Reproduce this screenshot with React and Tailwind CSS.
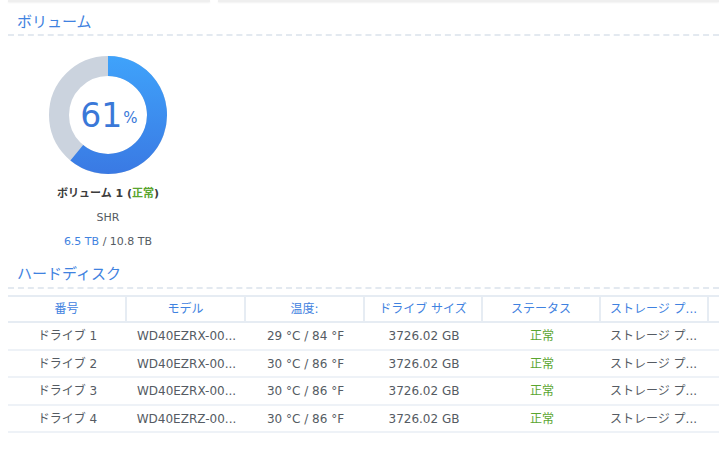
import React from "react";

const rows = [
  ["ドライブ 1", "WD40EZRX-00...", "29 °C / 84 °F"],
  ["ドライブ 2", "WD40EZRX-00...", "30 °C / 86 °F"],
  ["ドライブ 3", "WD40EZRX-00...", "30 °C / 86 °F"],
  ["ドライブ 4", "WD40EZRZ-00...", "30 °C / 86 °F"],
];

const cols = "grid grid-cols-[119px_119px_119px_118px_118px_108px_1fr]";

function arcPath(cx, cy, r, frac) {
  const a = frac * 2 * Math.PI;
  const x = cx + r * Math.sin(a);
  const y = cy - r * Math.cos(a);
  const large = frac > 0.5 ? 1 : 0;
  return `M ${cx} ${cy - r} A ${r} ${r} 0 ${large} 1 ${x.toFixed(2)} ${y.toFixed(2)}`;
}

function Donut() {
  const r = 49;
  return (
    <div className="relative w-[120px] h-[120px]">
      <svg width="120" height="120" viewBox="0 0 120 120">
        <defs>
          <linearGradient id="g" gradientUnits="userSpaceOnUse" x1="60" y1="0" x2="60" y2="120">
            <stop offset="0" stopColor="#3fa3fb" />
            <stop offset="1" stopColor="#3a79e3" />
          </linearGradient>
        </defs>
        <circle cx="60" cy="60" r={r} fill="none" stroke="#cbd3de" strokeWidth="20" />
        <path d={arcPath(60, 60, r, 0.61)} fill="none" stroke="url(#g)" strokeWidth="20" />
      </svg>
      <div className="absolute inset-0 flex items-center justify-center text-[#3a78d8] pl-[2px]">
        <span className="text-[33px] leading-none">61</span>
        <span className="text-[15px] leading-none mt-[7px] ml-[1px]">%</span>
      </div>
    </div>
  );
}

export default function App() {
  return (
    <div
      className="w-[719px] h-[450px] bg-white overflow-hidden text-[#555b63]"
      style={{ fontFamily: '"DejaVu Sans", "Noto Sans CJK JP", sans-serif' }}
    >
      <div className="flex gap-[8px] h-[3px]">
        <div className="ml-[8px] w-[202px] h-[2px] bg-[#efefef] shadow-[0_1px_2px_rgba(0,0,0,0.06)]" />
        <div className="flex-1 h-[2px] bg-[#efefef] shadow-[0_1px_2px_rgba(0,0,0,0.06)]" />
      </div>
      <div className="pl-[8px]">
        <div className="pl-[9px] pt-[9px] h-[31px] text-[15px] text-[#3f82e0] leading-[20px]">ボリューム</div>
        <div className="border-t-2 border-dashed border-[#e3e9f0]" />
        <div className="w-[200px] flex flex-col items-center pt-[19px]">
          <Donut />
          <div className="mt-[11px] text-[11px] font-bold text-[#3c3c3c] leading-[16px]">
            ボリューム 1 (<span className="text-[#5aa52f]">正常</span>)
          </div>
          <div className="mt-[8px] text-[11px] leading-[16px] text-[#555b63]">SHR</div>
          <div className="mt-[8px] text-[11px] leading-[16px] text-[#555b63]">
            <span className="text-[#3f82e0]">6.5 TB</span> / 10.8 TB
          </div>
        </div>
        <div className="pl-[9px] pt-[14px] h-[37px] text-[15px] text-[#3f82e0] leading-[20px]">ハードディスク</div>
        <div className="border-t-2 border-dashed border-[#e3e9f0]" />
        <div className="mt-[6px] border-t-2 border-[#e6ecf3]">
          <div className={`${cols} h-[26px] border-b-2 border-[#e6ecf3] text-[12px] text-[#3f82e0] leading-[24px]`}>
            <div className="text-center border-r-2 border-[#e6ecf3]">番号</div>
            <div className="text-center border-r-2 border-[#e6ecf3]">モデル</div>
            <div className="text-center border-r-2 border-[#e6ecf3]">温度:</div>
            <div className="text-center border-r-2 border-[#e6ecf3]">ドライブ サイズ</div>
            <div className="text-center border-r-2 border-[#e6ecf3]">ステータス</div>
            <div className="pl-[9px] border-r-2 border-[#e6ecf3]">ストレージ プ...</div>
            <div />
          </div>
          {rows.map((r, i) => (
            <div
              key={i}
              className={`${cols} h-[27.5px] border-b-2 border-[#eef2f7] text-[12px] leading-[26px]`}
            >
              <div className="text-center">{r[0]}</div>
              <div className="text-center">{r[1]}</div>
              <div className="text-center">{r[2]}</div>
              <div className="text-center">3726.02 GB</div>
              <div className="text-center text-[#5aa52f]">正常</div>
              <div className="pl-[9px]">ストレージ プ...</div>
              <div />
            </div>
          ))}
        </div>
      </div>
    </div>
  );
}
